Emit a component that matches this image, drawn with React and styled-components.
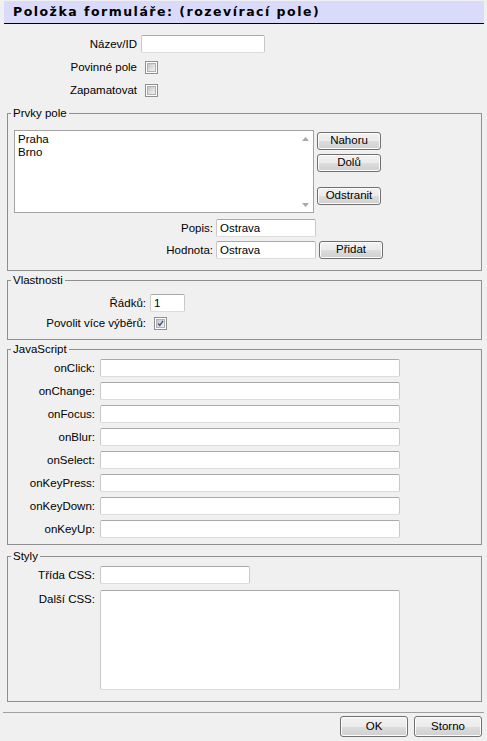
import React from "react";
import styled, { createGlobalStyle } from "styled-components";

const GlobalStyle = createGlobalStyle`
  html, body {
    margin: 0;
    padding: 0;
    background: #f0f0f0;
  }
  body {
    font-family: "Liberation Sans", Arial, sans-serif;
    font-size: 11.5px;
    color: #000;
  }
`;

const Dialog = styled.div`
  width: 487px;
  height: 741px;
  box-sizing: border-box;
  padding-top: 1px;
  display: flex;
  flex-direction: column;
  background: #f0f0f0;
  overflow: hidden;
`;

const Header = styled.h1`
  margin: 0 3px 0 4px;
  height: 23px;
  box-sizing: border-box;
  padding-left: 9px;
  background: #dadafb;
  border-bottom: 1px solid #000;
  font: bold 12.5px/22px "DejaVu Sans", Verdana, sans-serif;
  letter-spacing: 1.5px;
  color: #000;
  white-space: nowrap;
`;

const FormGrid = styled.div`
  display: grid;
  grid-template-columns: ${(p) => p.$cols};
  grid-auto-rows: minmax(18px, auto);
  column-gap: ${(p) => p.$colGap ?? 4}px;
  row-gap: ${(p) => p.$rowGap ?? 5}px;
  align-items: center;
  justify-items: start;
  margin-top: ${(p) => p.$top ?? 0}px;
`;

const Label = styled.label`
  justify-self: end;
  white-space: nowrap;
  line-height: 13px;
  align-self: ${(p) => (p.$top ? "start" : "center")};
  margin-top: ${(p) => (p.$top ? "3px" : "0")};
`;

const TextBox = styled.input`
  box-sizing: border-box;
  width: ${(p) => p.$w}px;
  height: 18px;
  margin: 0;
  padding: 0 3px;
  border: 1px solid #c9c9c9;
  border-top-color: #a9a9a9;
  border-bottom-color: #dcdcdc;
  border-radius: 2px;
  background: #fff;
  font: inherit;
  color: #000;
  outline: none;
`;

const TextArea = styled.textarea`
  box-sizing: border-box;
  width: 300px;
  height: 100px;
  margin: 0;
  padding: 2px 3px;
  border: 1px solid #c9c9c9;
  border-top-color: #a9a9a9;
  border-bottom-color: #dcdcdc;
  border-radius: 2px;
  background: #fff;
  resize: none;
  font: inherit;
  outline: none;
`;

const CheckBox = styled.span`
  box-sizing: border-box;
  display: inline-flex;
  align-items: center;
  justify-content: center;
  width: 13px;
  height: 13px;
  margin-left: 4px;
  border: 1px solid #8e8f8f;
  background: #fff;
  padding: 1px;

  span {
    display: flex;
    align-items: center;
    justify-content: center;
    width: 100%;
    height: 100%;
    background: linear-gradient(135deg, #c4c4c4 0%, #e2e2e2 60%, #f2f2f2 100%);
    border: 1px solid #b0b0b0;
    box-sizing: border-box;
  }
`;

const Group = styled.fieldset`
  margin: ${(p) => p.$top}px 5px 0 7px;
  padding: ${(p) => p.$pt}px 6px ${(p) => p.$pb}px 6px;
  border: 1px solid #8f8f8f;
  min-width: 0;
`;

const Legend = styled.legend`
  padding: 0 2px;
  margin-left: -3px;
  line-height: 14px;
`;

const Button = styled.button`
  box-sizing: border-box;
  width: ${(p) => p.$w}px;
  height: ${(p) => p.$h}px;
  margin: 0;
  padding: 0;
  border: 1px solid #707070;
  border-radius: 3px;
  background: linear-gradient(#f2f2f2 0%, #ebebeb 50%, #dddddd 51%, #cfcfcf 100%);
  box-shadow: inset 0 0 0 1px #fcfcfc;
  font: inherit;
  color: #000;
  line-height: 1;
`;

const ListRow = styled.div`
  display: flex;
  gap: 3px;
  align-items: flex-start;
`;

const ListBox = styled.div`
  box-sizing: border-box;
  width: 300px;
  height: 83px;
  display: flex;
  border: 1px solid #a3a3a3;
  background: #fff;
`;

const ListItems = styled.div`
  flex: 1;
  padding: 2px 3px;
  line-height: 13px;
`;

const ScrollTrack = styled.div`
  width: 16px;
  display: flex;
  flex-direction: column;
  justify-content: space-between;
  align-items: center;
  padding: 6px 0 5px;
`;

const ButtonStack = styled.div`
  display: flex;
  flex-direction: column;
  gap: 4px;
  padding-top: 2px;

  & > :nth-child(3) {
    margin-top: 11px;
  }
`;

const Separator = styled.hr`
  margin: 10px 3px 0 3px;
  border: 0;
  border-top: 1px solid #a0a0a0;
  height: 0;
`;

const Footer = styled.div`
  display: flex;
  justify-content: flex-end;
  gap: 6px;
  margin: 3px 5px 0 0;
`;

const Arrow = ({ up }) => (
  <svg width="7" height="4" viewBox="0 0 7 4">
    <path d={up ? "M0 4 L3.5 0 L7 4 Z" : "M0 0 L3.5 4 L7 0 Z"} fill="#a8a8a8" />
  </svg>
);

const Check = ({ checked }) => (
  <CheckBox>
    <span>
      {checked && (
        <svg width="9" height="9" viewBox="0 0 9 9">
          <path d="M1.5 4.5 L3.6 7 L7.8 1.2" fill="none" stroke="#3c4f8c" strokeWidth="1.7" />
        </svg>
      )}
    </span>
  </CheckBox>
);

const jsEvents = ["onClick", "onChange", "onFocus", "onBlur", "onSelect", "onKeyPress", "onKeyDown", "onKeyUp"];

export default function App() {
  return (
    <>
      <GlobalStyle />
      <Dialog>
        <Header>Položka formuláře: (rozevírací pole)</Header>

        {/* basic item settings */}
        <FormGrid $cols="137px auto" $top={11}>
          <Label>Název/ID</Label>
          <TextBox $w={124} />
          <Label>Povinné pole</Label>
          <Check />
          <Label>Zapamatovat</Label>
          <Check />
        </FormGrid>

        <Group $top={7} $pt={10} $pb={11}>
          <Legend>Prvky pole</Legend>
          <ListRow>
            <ListBox>
              <ListItems>
                <div>Praha</div>
                <div>Brno</div>
              </ListItems>
              <ScrollTrack>
                <Arrow up />
                <Arrow />
              </ScrollTrack>
            </ListBox>
            <ButtonStack>
              <Button $w={64} $h={18}>Nahoru</Button>
              <Button $w={64} $h={18}>Dolů</Button>
              <Button $w={64} $h={18}>Odstranit</Button>
            </ButtonStack>
          </ListRow>
          <FormGrid $cols="199px 100px 64px" $colGap={3} $rowGap={4} $top={6}>
            <Label>Popis:</Label>
            <TextBox $w={100} defaultValue="Ostrava" />
            <span />
            <Label>Hodnota:</Label>
            <TextBox $w={100} defaultValue="Ostrava" />
            <Button $w={64} $h={18}>Přidat</Button>
          </FormGrid>
        </Group>

        <Group $top={2} $pt={7} $pb={7}>
          <Legend>Vlastnosti</Legend>
          <FormGrid $cols="132px auto" $rowGap={2}>
            <Label>Řádků:</Label>
            <TextBox $w={35} defaultValue="1" />
            <Label>Povolit více výběrů:</Label>
            <Check checked />
          </FormGrid>
        </Group>

        <Group $top={2} $pt={3} $pb={6}>
          <Legend>JavaScript</Legend>
          <FormGrid $cols="81px auto" $colGap={5}>
            {jsEvents.map((ev) => (
              <React.Fragment key={ev}>
                <Label>{ev}:</Label>
                <TextBox $w={300} />
              </React.Fragment>
            ))}
          </FormGrid>
        </Group>

        <Group $top={4} $pt={3} $pb={11}>
          <Legend>Styly</Legend>
          <FormGrid $cols="81px auto" $colGap={5} $rowGap={6}>
            <Label>Třída CSS:</Label>
            <TextBox $w={150} />
            <Label $top>Další CSS:</Label>
            <TextArea />
          </FormGrid>
        </Group>

        <Separator />
        <Footer>
          <Button $w={68} $h={21}>OK</Button>
          <Button $w={68} $h={21}>Storno</Button>
        </Footer>
      </Dialog>
    </>
  );
}
